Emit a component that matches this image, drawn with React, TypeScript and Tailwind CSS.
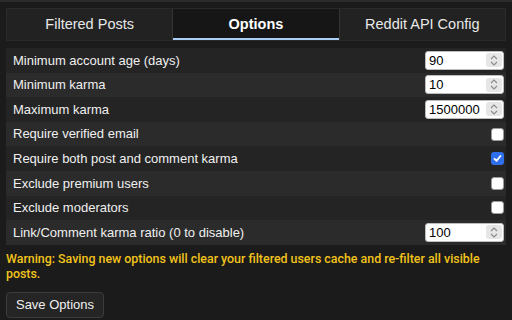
import { useState } from "react";

type Row =
  | { kind: "number"; label: string; value: string }
  | { kind: "check"; label: string; checked: boolean };

const rows: Row[] = [
  { kind: "number", label: "Minimum account age (days)", value: "90" },
  { kind: "number", label: "Minimum karma", value: "10" },
  { kind: "number", label: "Maximum karma", value: "1500000" },
  { kind: "check", label: "Require verified email", checked: false },
  { kind: "check", label: "Require both post and comment karma", checked: true },
  { kind: "check", label: "Exclude premium users", checked: false },
  { kind: "check", label: "Exclude moderators", checked: false },
  { kind: "number", label: "Link/Comment karma ratio (0 to disable)", value: "100" },
];

const tabs = ["Filtered Posts", "Options", "Reddit API Config"];

function Stepper() {
  return (
    <div className="flex h-[14px] w-[16px] items-center justify-center rounded-[3px] bg-[#e6e6e6]">
      <svg width="8" height="11" viewBox="0 0 8 11" fill="none" stroke="#8a8a8a" strokeWidth="1.1">
        <path d="M1 4 L4 1 L7 4" />
        <path d="M1 7 L4 10 L7 7" />
      </svg>
    </div>
  );
}

function NumberBox({ value }: { value: string }) {
  return (
    <div className="flex h-[19px] w-[79px] items-center justify-between rounded-[3px] border border-[#bdbdbd] bg-white pl-[3px] pr-[1px]">
      <span className="text-[13px] leading-none text-black">{value}</span>
      <Stepper />
    </div>
  );
}

function CheckBox({ checked }: { checked: boolean }) {
  if (checked) {
    return (
      <div className="flex h-[13px] w-[13px] items-center justify-center rounded-[3px] bg-[#2f6fec]">
        <svg width="9" height="9" viewBox="0 0 9 9" fill="none" stroke="white" strokeWidth="1.8" strokeLinecap="round" strokeLinejoin="round">
          <path d="M1.5 4.8 L3.6 6.8 L7.5 2" />
        </svg>
      </div>
    );
  }
  return <div className="h-[13px] w-[13px] rounded-[3px] border border-[#9a9a9a] bg-white" />;
}

export default function App() {
  const [active, setActive] = useState(1);

  return (
    <div
      className="h-[320px] w-[512px] overflow-hidden border-t-2 border-[#2c2c2c] bg-[#1b1b1b] px-[6px] pt-[6px] text-[#ececec]"
      style={{ fontFamily: '"Liberation Sans", Arial, sans-serif' }}
    >
      {/* Tabs */}
      <div className="flex h-[33px] border border-[#2a2a2a] bg-[#222222]">
        {tabs.map((t, i) => (
          <button
            key={t}
            onClick={() => setActive(i)}
            className={`relative flex flex-1 items-center justify-center text-[14.5px] ${
              i > 0 ? "border-l border-[#333333]" : ""
            } ${active === i ? "bg-[#161616] font-bold text-white" : "bg-[#222222] text-[#e8e8e8]"}`}
          >
            {t}
            {active === i && <span className="absolute bottom-0 left-0 right-0 h-[2px] bg-[#a9cdf3]" />}
          </button>
        ))}
      </div>

      {/* Options list */}
      <div className="mt-[7px] flex flex-col">
        {rows.map((r, i) => (
          <div
            key={r.label}
            className={`flex h-[24.6px] items-center justify-between pl-[7px] pr-[2px] ${
              i % 2 === 0 ? "bg-[#242424]" : "bg-[#2b2b2b]"
            }`}
          >
            <span className="text-[13px] text-[#f0f0f0]">{r.label}</span>
            {r.kind === "number" ? <NumberBox value={r.value} /> : <CheckBox checked={r.checked} />}
          </div>
        ))}
      </div>

      {/* Warning */}
      <p
        className="mt-[6px] text-[12.4px] font-medium leading-[15px] text-[#f2c31c]"
        style={{ fontFamily: 'Roboto, "Liberation Sans", sans-serif' }}
      >
        Warning: Saving new options will clear your filtered users cache and re-filter all visible posts.
      </p>

      <button className="mt-[11px] h-[26px] w-[98px] rounded-[4px] border border-[#3c3c3c] bg-[#252525] text-[13px] text-[#f0f0f0]">
        Save Options
      </button>
    </div>
  );
}
